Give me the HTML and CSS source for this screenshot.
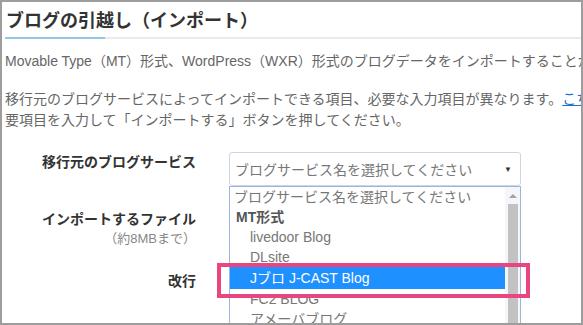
FILE: index.html
```html
<!DOCTYPE html>
<html lang="ja">
<head>
  <meta charset="UTF-8">
  <title>ブログの引越し（インポート）</title>
  <link rel="stylesheet" href="styles.css">
</head>
<body>

  <div class="frame">
    <h1 class="title">ブログの引越し（インポート）</h1>
    <div class="title-rule">
      <span class="rule-accent"></span>
      <span class="rule-rest"></span>
    </div>

    <p class="lead">Movable Type（MT）形式、WordPress（WXR）形式のブログデータをインポートすることができます。</p>
    <p class="lead note">移行元のブログサービスによってインポートできる項目、必要な入力項目が異なります。<a href="#">こちら</a>をご確認のうえ、必<br>要項目を入力して「インポートする」ボタンを押してください。</p>

    <div class="form">
      <div class="label">移行元のブログサービス</div>
      <div class="field">
        <div class="select">
          <span>ブログサービス名を選択してください</span>
          <span class="arrow">▼</span>
        </div>
      </div>

      <div class="label">
        インポートするファイル
        <div class="sub">（約8MBまで）</div>
      </div>
      <div class="field"></div>

      <div class="label">改行</div>
      <div class="field"></div>
    </div>

    <div class="bottom-band"></div>

    <!-- open dropdown of the select -->
    <div class="dropdown">
      <ul class="options">
        <li class="opt-first">ブログサービス名を選択してください</li>
        <li class="group">MT形式</li>
        <li>livedoor Blog</li>
        <li>DLsite</li>
        <li class="selected">Jブロ J-CAST Blog</li>
        <li>FC2 BLOG</li>
        <li>アメーバブログ</li>
        <li>エキサイトブログ</li>
      </ul>
      <div class="scrollbar">
        <span class="scroll-up"></span>
        <span class="thumb"></span>
      </div>
    </div>

    <div class="highlight"></div>
  </div>

</body>
</html>
```

FILE: styles.css
```css
body {
  margin: 0;
  font-family: "Liberation Sans", "Noto Sans CJK JP", sans-serif;
  background: #fff;
}

.frame {
  position: relative;
  width: 583px;
  height: 325px;
  box-sizing: border-box;
  border: 2px solid #9d9d9d;
  overflow: hidden;
  background: #fff;
}

.title {
  margin: 0;
  padding: 6px 0 0 4px;
  font-size: 18px;
  line-height: 26px;
  font-weight: bold;
  color: #333;
  white-space: nowrap;
}

.title-rule {
  display: flex;
  height: 2px;
  margin: 3px 0 0 3px;
}

.rule-accent {
  width: 100px;
  background: #8ec8e2;
}

.rule-rest {
  flex: 1;
  background: #ebebeb;
}

.lead {
  margin: 12px 0 0 3px;
  font-size: 14px;
  line-height: 21px;
  color: #666;
  white-space: nowrap;
}

.note {
  margin-top: 17px;
}

.note a {
  color: #1a73c9;
}

.form {
  display: grid;
  grid-template-columns: 194px 292px;
  column-gap: 33px;
  row-gap: 23px;
  margin-top: 21px;
}

.label {
  text-align: right;
  font-size: 14px;
  line-height: 21px;
  font-weight: bold;
  color: #333;
  white-space: nowrap;
}

.sub {
  font-size: 13px;
  line-height: 18px;
  font-weight: normal;
  color: #888;
}

.select {
  display: flex;
  align-items: center;
  justify-content: space-between;
  height: 34px;
  box-sizing: border-box;
  padding: 0 8px 0 5px;
  border: 1px solid #c9d8e4;
  border-radius: 3px;
  font-size: 14px;
  color: #777;
}

.arrow {
  font-size: 8px;
  color: #333;
}

.bottom-band {
  height: 10px;
  margin: 31px 0 0 14px;
  background: #f1f1f1;
}

.dropdown {
  position: absolute;
  left: 227px;
  top: 184px;
  width: 292px;
  height: 160px;
  box-sizing: border-box;
  display: flex;
  border: 1px solid #9bb6da;
  background: #fff;
}

.options {
  flex: 1;
  margin: 0;
  padding: 0;
  list-style: none;
  font-size: 14px;
  color: #777;
}

.options li {
  height: 20px;
  line-height: 20px;
  padding-left: 20px;
  white-space: nowrap;
}

.options .opt-first {
  padding-left: 4px;
}

.options .group {
  padding-left: 6px;
  font-weight: bold;
  color: #555;
}

.options .selected {
  height: 22px;
  line-height: 22px;
  background: #1e90ff;
  color: #fff;
}

.scrollbar {
  width: 15px;
  display: flex;
  flex-direction: column;
  align-items: center;
  background: #f4f6f9;
}

.scroll-up {
  width: 0;
  height: 0;
  margin: 7px 0 6px;
  border-left: 4px solid transparent;
  border-right: 4px solid transparent;
  border-bottom: 4px solid #a3a3a3;
}

.thumb {
  width: 10px;
  flex: 1;
  background: #c2c2c2;
}

.highlight {
  position: absolute;
  left: 215px;
  top: 261px;
  width: 313px;
  height: 35px;
  box-sizing: border-box;
  border: 4px solid #e94580;
}
```
